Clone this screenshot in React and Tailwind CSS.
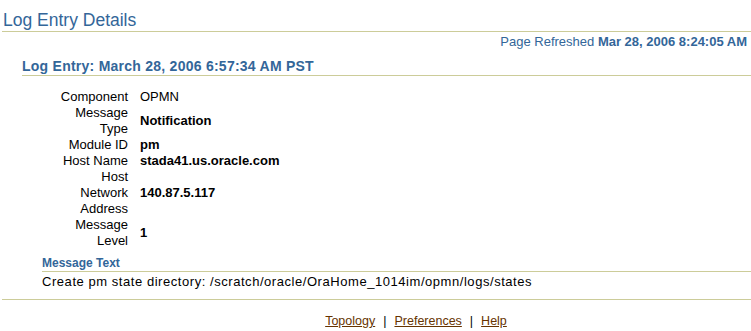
const fields = [
  { label: "Component", value: "OPMN", bold: false },
  { label: "Message Type", value: "Notification", bold: true },
  { label: "Module ID", value: "pm", bold: true },
  { label: "Host Name", value: "stada41.us.oracle.com", bold: true },
  { label: "Host Network Address", value: "140.87.5.117", bold: true },
  { label: "Message Level", value: "1", bold: true }
];

const links = ["Topology", "Preferences", "Help"];

export default function App() {
  return (
    <div className="w-[751px] h-[331px] bg-white text-black text-[13px] leading-[16px] font-['Liberation_Sans',Arial,sans-serif] overflow-hidden">
      <h1 className="ml-[2px] pl-[1px] pt-[10px] pb-[1px] text-[17.5px] leading-[20px] text-[#336699] border-b border-[#cccc99]">
        Log Entry Details
      </h1>

      <div className="mt-[2px] pr-[4px] text-right text-[#336699]">
        Page Refreshed <span className="font-bold">Mar 28, 2006 8:24:05 AM</span>
      </div>

      <h2 className="mt-[8px] ml-[22px] pb-[1px] text-[14px] tracking-[0.25px] font-bold text-[#336699] border-b border-[#cccc99]">
        Log Entry: March 28, 2006 6:57:34 AM PST
      </h2>

      <div className="mt-[13px] ml-[58px] grid grid-cols-[70px_1fr] gap-x-[12px]">
        {fields.map((f) => (
          <div key={f.label} className="contents">
            <div className="text-right">{f.label}</div>
            <div className={f.bold ? "flex items-center font-bold" : "flex items-center"}>
              {f.value}
            </div>
          </div>
        ))}
      </div>

      <h3 className="mt-[6px] ml-[42px] text-[12px] font-bold text-[#336699] border-b border-[#cccc99]">
        Message Text
      </h3>
      <p className="mt-[2px] ml-[42px] tracking-[0.55px]">
        Create pm state directory: /scratch/oracle/OraHome_1014im/opmn/logs/states
      </p>

      <div className="mt-[9px] ml-[2px] border-t border-[#cccc99]" />

      <div className="mt-[13px] pl-[81px] flex justify-center text-[12.5px]">
        {links.map((l, i) => (
          <span key={l} className="flex">
            {i > 0 && <span className="px-[8px]">|</span>}
            <a href="#" className="text-[#663300] underline">
              {l}
            </a>
          </span>
        ))}
      </div>
    </div>
  );
}
